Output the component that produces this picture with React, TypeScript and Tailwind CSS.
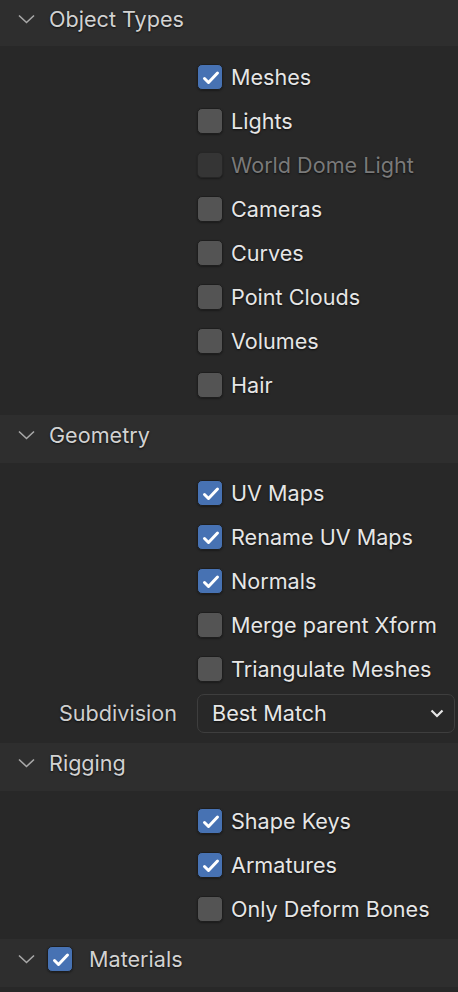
import React from 'react';

const shadow = '[text-shadow:0_1px_2px_rgba(0,0,0,0.7)]';

const Check = () => (
  <svg width="26" height="26" viewBox="0 0 26 26" className="block">
    <path d="M6.5 13.5 L10.5 17.5 L19.5 8" fill="none" stroke="white" strokeWidth="3" strokeLinecap="round" strokeLinejoin="round" />
  </svg>
);

const Checkbox: React.FC<{ checked?: boolean; disabled?: boolean }> = ({ checked, disabled }) => (
  <div
    className={
      'w-[26px] h-[26px] rounded-[5px] border shrink-0 shadow-[0_1px_2px_rgba(0,0,0,0.35)] ' +
      (checked
        ? 'bg-[#4772b3] border-[#1e1e1e]'
        : disabled
        ? 'bg-[#353535] border-[#262626]'
        : 'bg-[#545454] border-[#1e1e1e]')
    }
  >
    {checked && <Check />}
  </div>
);

const Chevron = () => (
  <svg width="17" height="10" viewBox="0 0 17 10" className="shrink-0">
    <path d="M1 1.5 L8.5 8.5 L16 1.5" fill="none" stroke="#a8a8a8" strokeWidth="1.6" />
  </svg>
);

const Header: React.FC<{ title: string; first?: boolean; checkbox?: boolean }> = ({ title, first, checkbox }) => (
  <div
    className={
      'flex items-center bg-[#2e2e2e] pl-[18px] ' + (first ? 'h-[46px] pb-[8px]' : 'h-[48px] pb-[8px]')
    }
  >
    <Chevron />
    {checkbox ? (
      <>
        <div className="ml-[12px]">
          <Checkbox checked />
        </div>
        <span className={'ml-[16px] mt-[2px] text-[21.6px] text-[#d2d2d2] ' + shadow}>{title}</span>
      </>
    ) : (
      <span className={'ml-[14px] mt-[2px] text-[21.6px] text-[#d2d2d2] ' + shadow}>{title}</span>
    )}
  </div>
);

const Row: React.FC<{ label: string; checked?: boolean; disabled?: boolean }> = ({ label, checked, disabled }) => (
  <div className="h-[44px] flex items-center pl-[197px]">
    <Checkbox checked={checked} disabled={disabled} />
    <span
      className={
        'ml-[8px] mt-[2px] text-[21.6px] ' + shadow + ' ' + (disabled ? 'text-[#7a7a7a]' : 'text-[#e6e6e6]')
      }
    >
      {label}
    </span>
  </div>
);

const Body: React.FC<{ children: React.ReactNode }> = ({ children }) => (
  <div className="bg-[#282828] pt-[8px] pb-[8px]">{children}</div>
);

export default function App() {
  return (
    <div className="w-[458px] h-[992px] overflow-hidden bg-[#282828] font-['Inter',sans-serif] leading-none select-none">
      <Header title="Object Types" first />
      <div className="bg-[#282828] pt-[9px] pb-[8px]">
        <Row label="Meshes" checked />
        <Row label="Lights" />
        <Row label="World Dome Light" disabled />
        <Row label="Cameras" />
        <Row label="Curves" />
        <Row label="Point Clouds" />
        <Row label="Volumes" />
        <Row label="Hair" />
      </div>
      <Header title="Geometry" />
      <Body>
        <Row label="UV Maps" checked />
        <Row label="Rename UV Maps" checked />
        <Row label="Normals" checked />
        <Row label="Merge parent Xform" />
        <Row label="Triangulate Meshes" />
        <div className="h-[44px] flex items-center">
          <span className={'w-[177px] mt-[2px] text-right text-[21.6px] text-[#cfcfcf] ' + shadow}>Subdivision</span>
          <div className="ml-[20px] w-[258px] h-[39px] rounded-[7px] border border-[#3e3e3e] bg-[#282828] flex items-center justify-between pl-[14px] pr-[10px]">
            <span className={'mt-[2px] text-[21.6px] text-[#e6e6e6] ' + shadow}>Best Match</span>
            <svg width="14" height="9" viewBox="0 0 14 9">
              <path d="M1.5 1.5 L7 7 L12.5 1.5" fill="none" stroke="#e6e6e6" strokeWidth="2.2" />
            </svg>
          </div>
        </div>
      </Body>
      <Header title="Rigging" />
      <Body>
        <Row label="Shape Keys" checked />
        <Row label="Armatures" checked />
        <Row label="Only Deform Bones" />
      </Body>
      <Header title="Materials" checkbox />
    </div>
  );
}
